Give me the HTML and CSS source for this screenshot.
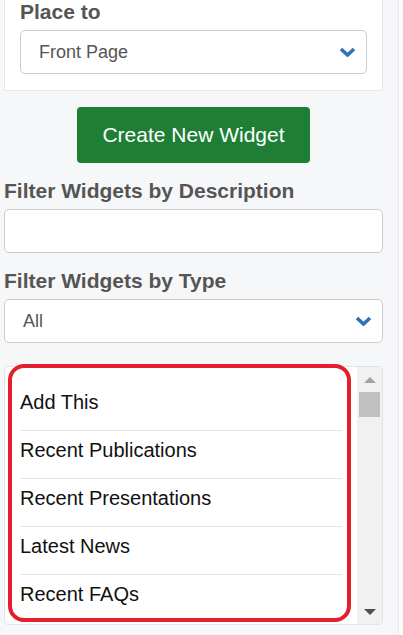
FILE: index.html
```html
<!DOCTYPE html>
<html>
<head>
    <meta name="viewport" content="width=device-width, initial-scale=1.0">
    <title>Widgets</title>
    <link rel="stylesheet" href="styles.css">
</head>
<body>
    <div class="sidebar">
        <div class="place-box">
            <div class="field-label">Place to</div>
            <div class="select">
                <span>Front Page</span>
                <svg class="chevron" width="17" height="10" viewBox="0 0 17 10"><path d="M2 2 L8.5 8 L15 2" fill="none" stroke="#2f73b6" stroke-width="3.6"/></svg>
            </div>
        </div>
        <div class="button-container">
            <button class="create-btn">Create New Widget</button>
        </div>
        <div class="field-label">Filter Widgets by Description</div>
        <input class="text-input" type="text">
        <div class="field-label type-label">Filter Widgets by Type</div>
        <div class="select">
            <span>All</span>
            <svg class="chevron" width="17" height="10" viewBox="0 0 17 10"><path d="M2 2 L8.5 8 L15 2" fill="none" stroke="#2f73b6" stroke-width="3.6"/></svg>
        </div>
        <div class="widget-box">
            <ul class="widget-list">
                <li>Add This</li>
                <li>Recent Publications</li>
                <li>Recent Presentations</li>
                <li>Latest News</li>
                <li>Recent FAQs</li>
            </ul>
            <div class="scrollbar">
                <div class="scroll-btn"><span class="arrow up"></span></div>
                <div class="scroll-track"><div class="scroll-thumb"></div></div>
                <div class="scroll-btn"><span class="arrow down"></span></div>
            </div>
            <div class="highlight"></div>
        </div>
    </div>
</body>
</html>
```

FILE: styles.css
```css
html, body {
    margin: 0;
    padding: 0;
    height: 100%;
    overflow: hidden;
}
body {
    font-family: 'Liberation Sans', Arial, sans-serif;
    background: #fbfbfc;
    color: #333;
}
.sidebar {
    box-sizing: border-box;
    width: 399px;
    height: 651px;
    margin-top: -16px;
    padding: 0 15px 0 4px;
    background: #f6f7f9;
    border-right: 1px solid #e6e8eb;
}
.place-box {
    background: #fff;
    border: 1px solid #e6e7e9;
    border-top: 0;
    padding: 16px 15px 16px 15px;
}
.field-label {
    font-size: 21px;
    font-weight: bold;
    line-height: 24px;
    color: #555;
    margin: 0 0 6px;
}
.select {
    box-sizing: border-box;
    height: 44px;
    display: flex;
    align-items: center;
    justify-content: space-between;
    padding: 0 10px 0 18px;
    background: #fff;
    border: 1px solid #ccc;
    border-radius: 5px;
    font-size: 18px;
    color: #555;
}
.chevron {
    display: block;
}
.button-container {
    display: flex;
    justify-content: center;
    margin: 16px 0;
}
.create-btn {
    font-family: 'Liberation Sans', Arial, sans-serif;
    font-size: 21px;
    line-height: 24px;
    color: #fff;
    background: #1f7e36;
    border: 0;
    border-radius: 4px;
    padding: 16px 25px;
    cursor: pointer;
}
.text-input {
    display: block;
    box-sizing: border-box;
    width: 100%;
    height: 44px;
    margin: 0;
    border: 1px solid #ccc;
    border-radius: 5px;
    background: #fff;
}
.type-label {
    margin-top: 16px;
}
.widget-box {
    position: relative;
    box-sizing: border-box;
    height: 259px;
    margin-top: 23px;
    display: flex;
    background: #fff;
    border: 1px solid #e3e4e6;
    border-radius: 4px;
}
.widget-list {
    flex: 1;
    list-style: none;
    margin: 0;
    padding: 16px 15px 0;
    overflow: hidden;
}
.widget-list li {
    font-size: 20px;
    line-height: 23px;
    color: #111;
    padding: 8px 0 16px;
    border-bottom: 1px solid #e6e6e6;
}
.widget-list li:last-child {
    border-bottom: 0;
}
.scrollbar {
    width: 25px;
    display: flex;
    flex-direction: column;
    background: #f1f1f1;
}
.scroll-btn {
    height: 25px;
    display: flex;
    align-items: center;
    justify-content: center;
}
.scroll-track {
    flex: 1;
}
.scroll-thumb {
    height: 25px;
    margin: 0 2px;
    background: #c1c1c1;
}
.arrow {
    width: 0;
    height: 0;
    border-left: 6px solid transparent;
    border-right: 6px solid transparent;
}
.arrow.up {
    border-bottom: 6px solid #a3a3a3;
}
.arrow.down {
    border-top: 6px solid #505050;
}
.highlight {
    position: absolute;
    top: -3px;
    left: 3px;
    right: 31px;
    bottom: 2px;
    border: 4px solid #e21f2b;
    border-radius: 16px;
    pointer-events: none;
}
```
